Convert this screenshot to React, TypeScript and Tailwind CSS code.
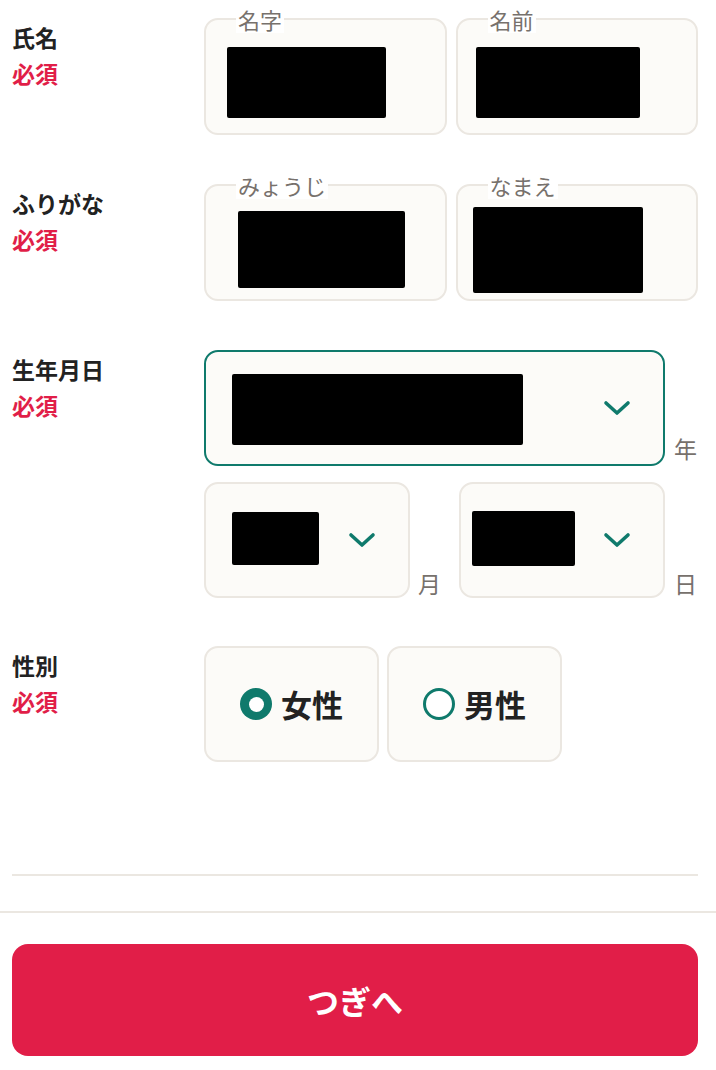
import React from 'react';

const font = { fontFamily: '"Noto Sans CJK JP", "Noto Sans", sans-serif' };

function Label({ title }: { title: string }) {
  return (
    <div className="w-[192px] shrink-0 pt-[1px]">
      <div className="text-[23px] leading-[36px] font-bold text-[#222]">{title}</div>
      <div className="text-[23px] leading-[36px] font-bold text-[#e11e48]">必須</div>
    </div>
  );
}

type Mask = { l: number; t: number; w: number; h: number };

function Redact({ m }: { m: Mask }) {
  return (
    <div
      className="absolute bg-black rounded-[2px]"
      style={{ left: m.l, top: m.t, width: m.w, height: m.h }}
    />
  );
}

function TextBox({ label, mask }: { label: string; mask: Mask }) {
  return (
    <div className="relative flex-1 h-[117px] rounded-[14px] border-2 border-[#ebe7e1] bg-[#fcfbf8]">
      <span className="absolute left-[30px] -top-[15px] px-[2px] bg-white text-[22px] leading-[28px] text-[#77716c]">
        {label}
      </span>
      <Redact m={mask} />
    </div>
  );
}

function Chevron() {
  return (
    <svg width="28" height="16" viewBox="0 0 28 16" fill="none">
      <path d="M3 3l11 10L25 3" stroke="#0f7a6c" strokeWidth="3.6" strokeLinecap="round" strokeLinejoin="round" />
    </svg>
  );
}

function Select({ width, active, mask }: { width: number; active?: boolean; mask: Mask }) {
  return (
    <div
      className={
        'relative h-[116px] rounded-[14px] border-2 bg-[#fcfbf8] flex items-center justify-end pr-[32px] ' +
        (active ? 'border-[#0f7a6c]' : 'border-[#ebe7e1]')
      }
      style={{ width }}
    >
      <Redact m={mask} />
      <Chevron />
    </div>
  );
}

function Unit({ ch }: { ch: string }) {
  return <span className="text-[23px] leading-[28px] text-[#77716c] mb-[4px]">{ch}</span>;
}

function Radio({ label, checked }: { label: string; checked?: boolean }) {
  return (
    <div className="w-[175px] h-[116px] rounded-[14px] border-2 border-[#ebe7e1] bg-[#fcfbf8] flex items-center justify-center gap-[9px]">
      {checked ? (
        <span className="w-[32px] h-[32px] rounded-full bg-[#0f7a6c] flex items-center justify-center">
          <span className="w-[15px] h-[15px] rounded-full bg-white" />
        </span>
      ) : (
        <span className="w-[32px] h-[32px] rounded-full border-[3.5px] border-[#0f7a6c] bg-white" />
      )}
      <span className="text-[31px] leading-[40px] font-bold text-[#222]">{label}</span>
    </div>
  );
}

export default function App() {
  return (
    <div className="w-[716px] min-h-[1070px] bg-white" style={font}>
      <div className="pl-[12px] pr-[18px] pt-[18px]">
        {/* 氏名 */}
        <div className="flex">
          <Label title="氏名" />
          <div className="flex-1 flex gap-[9px]">
            <TextBox label="名字" mask={{ l: 21, t: 27, w: 159, h: 71 }} />
            <TextBox label="名前" mask={{ l: 18, t: 27, w: 164, h: 71 }} />
          </div>
        </div>

        {/* ふりがな */}
        <div className="flex mt-[49px]">
          <Label title="ふりがな" />
          <div className="flex-1 flex gap-[9px]">
            <TextBox label="みょうじ" mask={{ l: 32, t: 25, w: 167, h: 77 }} />
            <TextBox label="なまえ" mask={{ l: 15, t: 21, w: 170, h: 86 }} />
          </div>
        </div>

        {/* 生年月日 */}
        <div className="flex mt-[49px]">
          <Label title="生年月日" />
          <div className="flex-1 flex flex-col gap-[16px]">
            <div className="flex items-end gap-[9px]">
              <Select width={461} active mask={{ l: 26, t: 22, w: 291, h: 71 }} />
              <Unit ch="年" />
            </div>
            <div className="flex items-end">
              <Select width={206} mask={{ l: 26, t: 28, w: 87, h: 53 }} />
              <span className="ml-[8px] w-[41px]"><Unit ch="月" /></span>
              <Select width={206} mask={{ l: 11, t: 27, w: 103, h: 55 }} />
              <span className="ml-[9px]"><Unit ch="日" /></span>
            </div>
          </div>
        </div>

        {/* 性別 */}
        <div className="flex mt-[48px]">
          <Label title="性別" />
          <div className="flex-1 flex gap-[8px]">
            <Radio label="女性" checked />
            <Radio label="男性" />
          </div>
        </div>

        <div className="mt-[112px] h-[2px] bg-[#ebe7e1]" />
      </div>

      <div className="mt-[35px] h-[2px] bg-[#ebe7e1]" />

      <div className="pl-[12px] pr-[18px] pt-[31px]">
        <button className="w-full h-[112px] rounded-[16px] bg-[#e11e48] text-white text-[32px] font-bold flex items-center justify-center">
          つぎへ
        </button>
      </div>
    </div>
  );
}
